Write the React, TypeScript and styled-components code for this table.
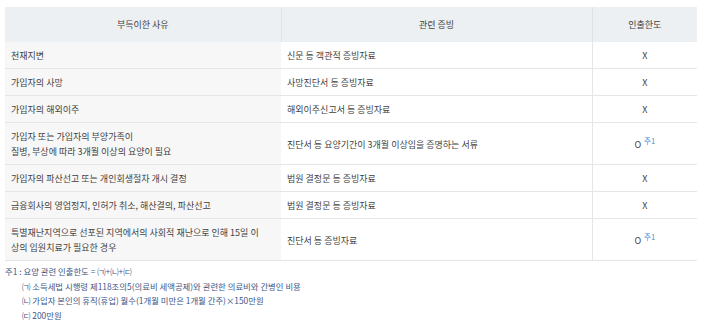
import React from 'react';
import styled, { createGlobalStyle } from 'styled-components';

const GlobalStyle = createGlobalStyle`
  body {
    margin: 0;
    background: #fff;
    font-family: "Noto Sans CJK KR", "Noto Sans", sans-serif;
  }
`;

const Page = styled.div`
  padding: 7px 5px 0;
`;

const Table = styled.table`
  width: 692px;
  border-collapse: collapse;
  table-layout: fixed;
  font-size: 9px;
  color: #3f3f3f;
`;

const HeadCell = styled.th`
  background: #edf0f3;
  font-weight: 400;
  color: #3f3f3f;
  line-height: 15px;
  padding: 10px 6px;
  text-align: center;
  border-left: 1px solid #dfe3e8;
  &:first-child {
    border-left: none;
  }
`;

const Row = styled.tr`
  border-bottom: 1px solid #e6e6e6;
`;

const Cell = styled.td<{ $kind?: 'reason' | 'proof' | 'limit' }>`
  line-height: 15px;
  padding: 6px 6px 5px;
  vertical-align: middle;
  background: ${(p) => (p.$kind === 'reason' ? '#f7f7f7' : '#fff')};
  text-align: ${(p) => (p.$kind === 'limit' ? 'center' : 'left')};
  border-left: ${(p) => (p.$kind === 'limit' ? '1px solid #e6e6e6' : 'none')};
`;

const Note = styled.sup`
  color: #3a8ad8;
  font-size: 7.5px;
  margin-left: 3px;
  vertical-align: 4px;
  line-height: 0;
`;

const Footnotes = styled.div`
  margin-top: 3px;
  font-size: 8.4px;
  line-height: 14.5px;
  color: #3d5687;
`;

const NoteLine = styled.div<{ $indent?: boolean }>`
  padding-left: ${(p) => (p.$indent ? '17px' : '0')};
`;

type Item = { reason: string[]; proof: string; allowed: boolean };

const items: Item[] = [
  { reason: ['천재지변'], proof: '신문 등 객관적 증빙자료', allowed: false },
  { reason: ['가입자의 사망'], proof: '사망진단서 등 증빙자료', allowed: false },
  { reason: ['가입자의 해외이주'], proof: '해외이주신고서 등 증빙자료', allowed: false },
  {
    reason: ['가입자 또는 가입자의 부양가족이', '질병, 부상에 따라 3개월 이상의 요양이 필요'],
    proof: '진단서 등 요양기간이 3개월 이상임을 증명하는 서류',
    allowed: true,
  },
  { reason: ['가입자의 파산선고 또는 개인회생절차 개시 결정'], proof: '법원 결정문 등 증빙자료', allowed: false },
  { reason: ['금융회사의 영업정지, 인허가 취소, 해산결의, 파산선고'], proof: '법원 결정문 등 증빙자료', allowed: false },
  {
    reason: ['특별재난지역으로 선포된 지역에서의 사회적 재난으로 인해 15일 이', '상의 입원치료가 필요한 경우'],
    proof: '진단서 등 증빙자료',
    allowed: true,
  },
];

const App = () => {
  return (
    <Page>
      <GlobalStyle />
      <Table>
        <colgroup>
          <col style={{ width: 276 }} />
          <col style={{ width: 311 }} />
          <col style={{ width: 105 }} />
        </colgroup>
        <thead>
          <tr>
            <HeadCell>부득이한 사유</HeadCell>
            <HeadCell>관련 증빙</HeadCell>
            <HeadCell>인출한도</HeadCell>
          </tr>
        </thead>
        <tbody>
          {items.map((item, index) => (
            <Row key={index}>
              <Cell $kind="reason">
                {item.reason.map((line, i) => (
                  <div key={i}>{line}</div>
                ))}
              </Cell>
              <Cell $kind="proof">{item.proof}</Cell>
              <Cell $kind="limit">
                {item.allowed ? (
                  <>
                    O<Note>주1</Note>
                  </>
                ) : (
                  'X'
                )}
              </Cell>
            </Row>
          ))}
        </tbody>
      </Table>
      <Footnotes>
        <NoteLine>주1 : 요양 관련 인출한도 = ㈀+㈁+㈂</NoteLine>
        <NoteLine $indent>㈀ 소득세법 시행령 제118조의5(의료비 세액공제)와 관련한 의료비와 간병인 비용</NoteLine>
        <NoteLine $indent>㈁ 가입자 본인의 휴직(휴업) 월수(1개월 미만은 1개월 간주)×150만원</NoteLine>
        <NoteLine $indent>㈂ 200만원</NoteLine>
      </Footnotes>
    </Page>
  );
};

export default App;
